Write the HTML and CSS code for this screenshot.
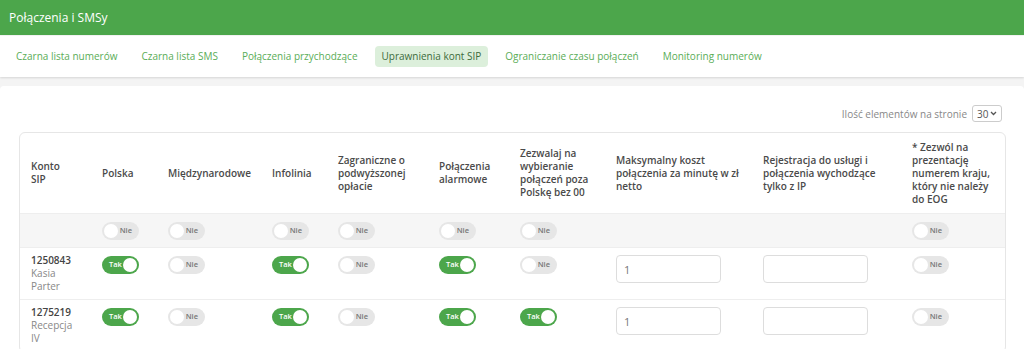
FILE: index.html
```html
<!DOCTYPE html>
<html lang="pl">
<head>
    <meta charset="UTF-8">
    <title>Połączenia i SMSy</title>
    <link rel="stylesheet" href="styles.css">
</head>
<body>
    <div class="topbar">Połączenia i SMSy</div>

    <div class="tabs">
        <a class="tab">Czarna lista numerów</a>
        <a class="tab">Czarna lista SMS</a>
        <a class="tab">Połączenia przychodzące</a>
        <a class="tab active">Uprawnienia kont SIP</a>
        <a class="tab">Ograniczanie czasu połączeń</a>
        <a class="tab">Monitoring numerów</a>
    </div>

    <div class="content">
        <div class="per-page">
            <span>Ilość elementów na stronie</span>
            <div class="select">30 <svg width="7" height="5" viewBox="0 0 7 5"><path d="M1 1l2.5 2.5L6 1" fill="none" stroke="#555" stroke-width="1.3"/></svg></div>
        </div>

        <div class="card">
            <table>
                <colgroup>
                    <col style="width:71px"><col style="width:66px"><col style="width:104px"><col style="width:66px">
                    <col style="width:101px"><col style="width:81px"><col style="width:96px"><col style="width:147px">
                    <col style="width:149px"><col style="width:106px">
                </colgroup>
                <thead>
                    <tr>
                        <th>Konto<br>SIP</th>
                        <th>Polska</th>
                        <th>Międzynarodowe</th>
                        <th>Infolinia</th>
                        <th>Zagraniczne o podwyższonej opłacie</th>
                        <th>Połączenia alarmowe</th>
                        <th>Zezwalaj na wybieranie połączeń poza Polskę bez 00</th>
                        <th>Maksymalny koszt połączenia za minutę w zł netto</th>
                        <th>Rejestracja do usługi i połączenia wychodzące tylko z IP</th>
                        <th>* Zezwól na prezentację numerem kraju, który nie należy do EOG</th>
                    </tr>
                </thead>
                <tbody>
                    <tr class="filter">
                        <td></td>
                        <td><span class="toggle">Nie</span></td>
                        <td><span class="toggle">Nie</span></td>
                        <td><span class="toggle">Nie</span></td>
                        <td><span class="toggle">Nie</span></td>
                        <td><span class="toggle">Nie</span></td>
                        <td><span class="toggle">Nie</span></td>
                        <td></td>
                        <td></td>
                        <td><span class="toggle">Nie</span></td>
                    </tr>
                    <tr>
                        <td class="account"><b>1250843</b><br>Kasia<br>Parter</td>
                        <td><span class="toggle on">Tak</span></td>
                        <td><span class="toggle">Nie</span></td>
                        <td><span class="toggle on">Tak</span></td>
                        <td><span class="toggle">Nie</span></td>
                        <td><span class="toggle on">Tak</span></td>
                        <td><span class="toggle">Nie</span></td>
                        <td><input class="field" value="1"></td>
                        <td><input class="field" value=""></td>
                        <td><span class="toggle">Nie</span></td>
                    </tr>
                    <tr>
                        <td class="account"><b>1275219</b><br>Recepcja<br>IV</td>
                        <td><span class="toggle on">Tak</span></td>
                        <td><span class="toggle">Nie</span></td>
                        <td><span class="toggle on">Tak</span></td>
                        <td><span class="toggle">Nie</span></td>
                        <td><span class="toggle on">Tak</span></td>
                        <td><span class="toggle on">Tak</span></td>
                        <td><input class="field" value="1"></td>
                        <td><input class="field" value=""></td>
                        <td><span class="toggle">Nie</span></td>
                    </tr>
                </tbody>
            </table>
        </div>
    </div>
</body>
</html>
```

FILE: styles.css
```css
body {
    margin: 0;
    font-family: "Open Sans", sans-serif;
    background-color: #f4f4f4;
    color: #444;
}
.topbar {
    height: 35px;
    padding-left: 9px;
    line-height: 35px;
    background-color: #4ca64b;
    color: white;
    font-size: 12px;
}
.tabs {
    display: flex;
    gap: 10px;
    height: 41px;
    align-items: center;
    padding-left: 9px;
    margin-top: 1px;
    background: white;
    box-shadow: 0 1px 2px rgba(0, 0, 0, 0.12);
}
.tab {
    padding: 4px 7px;
    border-radius: 4px;
    color: #5aad57;
    font-size: 10px;
    line-height: 13px;
}
.tab.active {
    background-color: #dcefdb;
    color: #3d6b3b;
}
.content {
    margin-top: 9px;
    padding: 19px 18px 0 19px;
    background: white;
    border-radius: 4px 4px 0 0;
}
.per-page {
    display: flex;
    justify-content: flex-end;
    align-items: center;
    gap: 5px;
    height: 17px;
    margin-bottom: 10px;
    padding-right: 4px;
    font-size: 10px;
    color: #888;
}
.select {
    display: flex;
    align-items: center;
    justify-content: space-between;
    box-sizing: border-box;
    width: 30px;
    height: 17px;
    padding: 0 4px;
    border: 1px solid #ccc;
    border-radius: 3px;
    color: #555;
}
.card {
    border: 1px solid #e6e6e6;
    border-radius: 6px;
    overflow: hidden;
}
table {
    border-collapse: collapse;
    table-layout: fixed;
    width: 100%;
}
th {
    height: 80px;
    padding: 0 11px;
    text-align: left;
    font-size: 10px;
    font-weight: 600;
    line-height: 13px;
    color: #4a4a4a;
}
td {
    padding: 8px 11px 0;
    vertical-align: top;
    border-top: 1px solid #eee;
    font-size: 10px;
    line-height: 13px;
}
tbody tr {
    height: 52px;
}
tr.filter {
    height: 34px;
    background-color: #f6f6f6;
}
tr.filter td {
    vertical-align: middle;
    padding-top: 0;
}
.account {
    padding-top: 6px;
    color: #888;
}
.account b {
    color: #444;
    font-weight: 600;
}
.toggle {
    display: flex;
    align-items: center;
    justify-content: flex-end;
    position: relative;
    box-sizing: border-box;
    width: 37px;
    height: 18px;
    padding: 0 7px 1px;
    border-radius: 9px;
    background-color: #e6e6e6;
    color: #777;
    font-size: 7.5px;
    font-weight: 600;
}
.toggle::before {
    content: "";
    position: absolute;
    left: 2px;
    top: 2px;
    width: 14px;
    height: 14px;
    border-radius: 50%;
    background: white;
}
.toggle.on {
    justify-content: flex-start;
    background-color: #4ca64b;
    color: white;
}
.toggle.on::before {
    left: auto;
    right: 2px;
}
.field {
    box-sizing: border-box;
    width: 105px;
    height: 28px;
    margin-top: -1px;
    padding: 0 7px;
    border: 1px solid #ddd;
    border-radius: 4px;
    font-family: "Open Sans", sans-serif;
    font-size: 11px;
    color: #777;
}
```
